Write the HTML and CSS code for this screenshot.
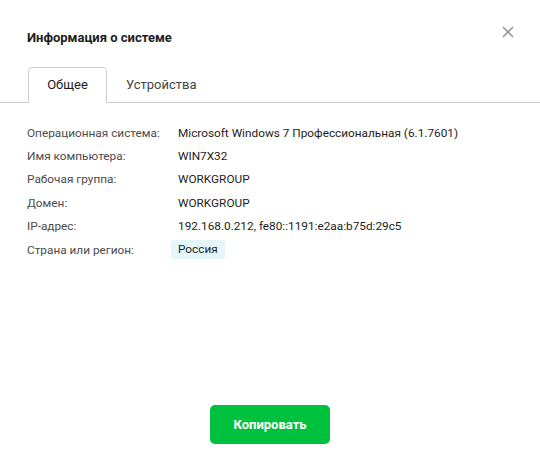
FILE: index.html
```html
<!DOCTYPE html>
<html lang="ru">
<head>
<meta charset="utf-8">
<title>Информация о системе</title>
<link rel="stylesheet" href="styles.css">
</head>
<body>
<div class="dialog">
  <header class="header">
    <h1 class="title">Информация о системе</h1>
    <button class="close" aria-label="Закрыть">
      <svg width="12" height="12" viewBox="0 0 12 12"><path d="M1 1L11 11M11 1L1 11" stroke="#9a9a9a" stroke-width="1.6" fill="none"/></svg>
    </button>
  </header>
  <nav class="tabs">
    <div class="tab active">Общее</div>
    <div class="tab">Устройства</div>
  </nav>
  <main class="content">
    <div class="info">
      <div class="label">Операционная система:</div><div class="value">Microsoft Windows 7 Профессиональная (6.1.7601)</div>
      <div class="label">Имя компьютера:</div><div class="value">WIN7X32</div>
      <div class="label">Рабочая группа:</div><div class="value">WORKGROUP</div>
      <div class="label">Домен:</div><div class="value">WORKGROUP</div>
      <div class="label">IP-адрес:</div><div class="value">192.168.0.212, fe80::1191:e2aa:b75d:29c5</div>
      <div class="label">Страна или регион:</div><div class="value"><span class="badge">Россия</span></div>
    </div>
  </main>
  <footer class="footer">
    <button class="copy">Копировать</button>
  </footer>
</div>
</body>
</html>
```
FILE: styles.css
```css
html, body {
  margin: 0;
  padding: 0;
  background: #fff;
}
body {
  font-family: Roboto, "Noto Sans", sans-serif;
  color: #1d1d1b;
}
.dialog {
  height: 468px;
  display: flex;
  flex-direction: column;
}
.header {
  display: flex;
  justify-content: space-between;
  align-items: flex-start;
  padding: 26px 26px 0 27px;
}
.title {
  margin: 4px 0 0;
  font-size: 13px;
  font-weight: 700;
  line-height: 16px;
  color: #1d1d1b;
}
.close {
  border: 0;
  background: none;
  padding: 0;
  width: 12px;
  height: 12px;
  display: block;
}
.close svg { display: block; }
.tabs {
  display: flex;
  margin-top: 21px;
  padding-left: 28px;
  border-bottom: 1px solid #cfcfcf;
  height: 35px;
}
.tab {
  box-sizing: border-box;
  height: 36px;
  padding: 0 19px;
  font-size: 13px;
  line-height: 35px;
  color: #444;
}
.tab.active {
  width: 79px;
  padding: 0;
  text-align: center;
  color: #1d1d1b;
  background: #fff;
  border: 1px solid #cfcfcf;
  border-bottom: 0;
  border-radius: 5px 5px 0 0;
  line-height: 34px;
}
.content {
  flex: 1;
  padding: 18px 27px 0;
}
.info {
  display: grid;
  grid-template-columns: 151px auto;
  grid-auto-rows: 23.4px;
  font-size: 11.8px;
  align-items: center;
}
.label { color: #4a4a4a; }
.value { color: #1d1d1b; }
.badge {
  display: inline-block;
  margin-left: -7px;
  padding: 0 7px;
  height: 19px;
  line-height: 19px;
  border-radius: 3px;
  background: #e4f6fa;
}
.footer {
  display: flex;
  justify-content: center;
  padding-bottom: 24px;
}
.copy {
  width: 120px;
  height: 39px;
  border: 0;
  border-radius: 5px;
  background: #00c13d;
  color: #fff;
  font-family: Roboto, "Noto Sans", sans-serif;
  font-size: 13px;
  font-weight: 700;
}
```
